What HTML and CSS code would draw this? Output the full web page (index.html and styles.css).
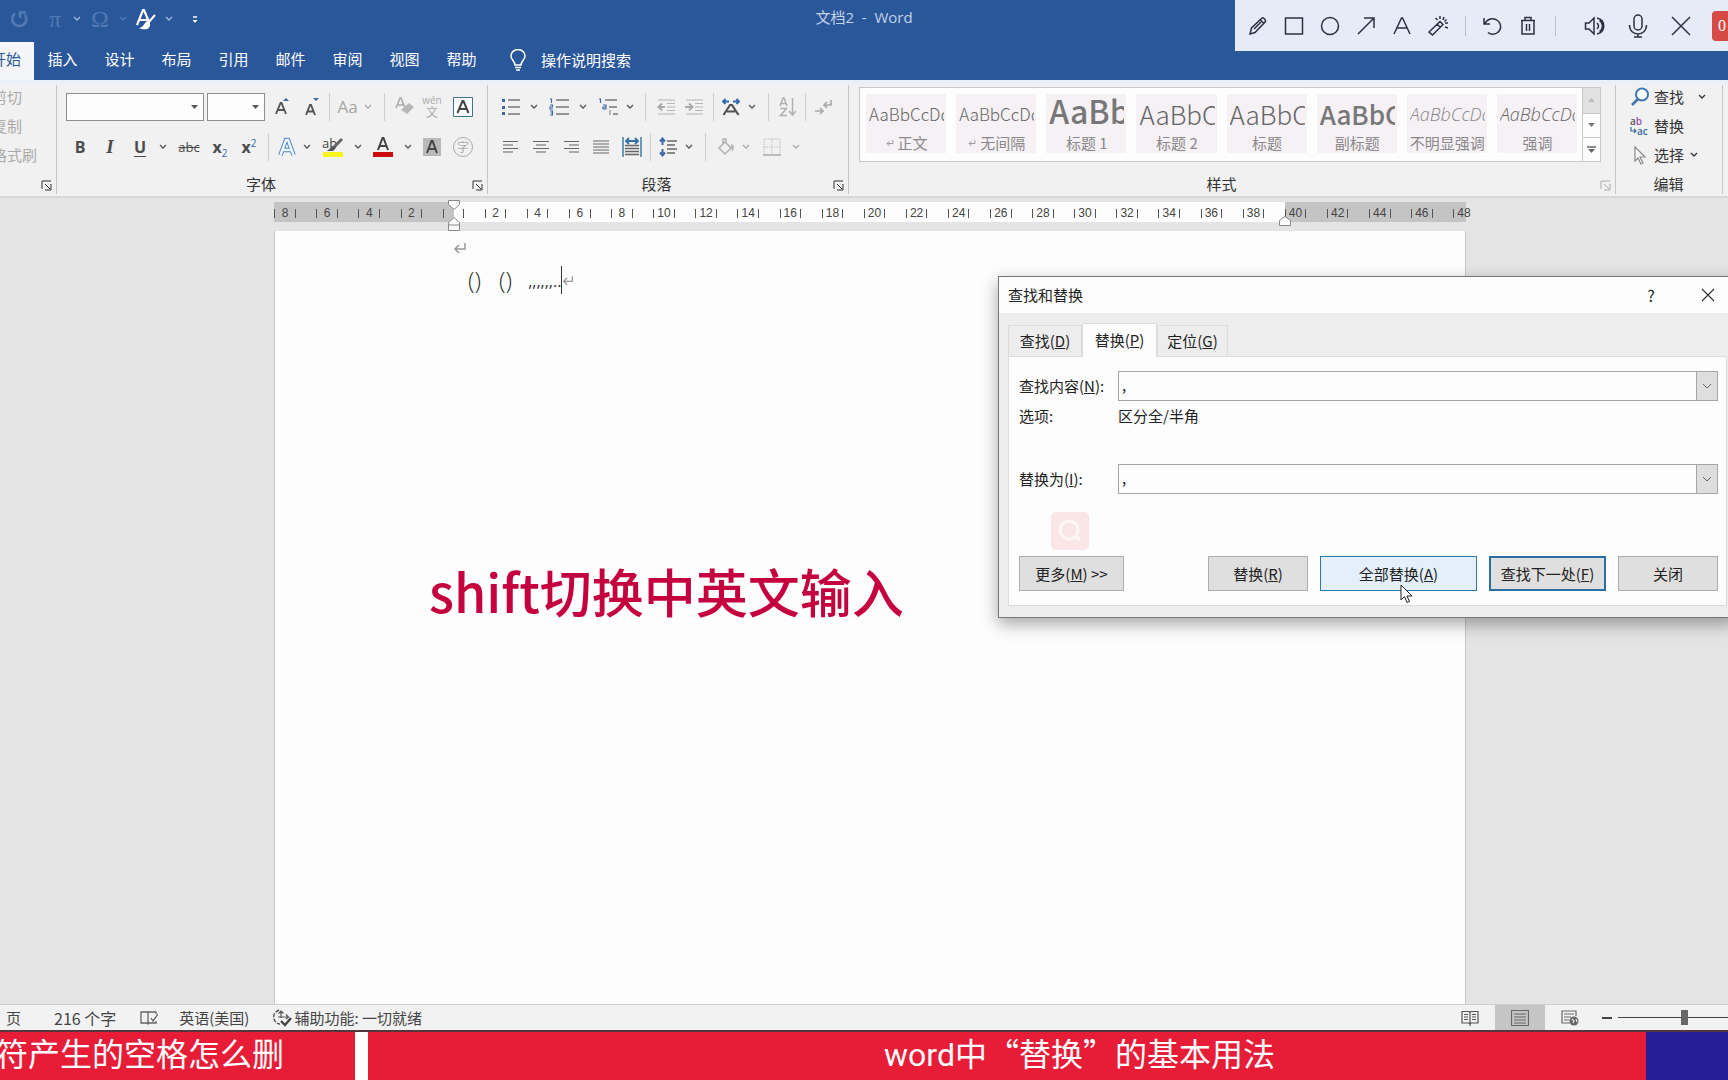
FILE: index.html
```html
<!DOCTYPE html>
<html lang="zh-CN">
<head>
<meta charset="utf-8">
<title>文档2 - Word</title>
<link rel="stylesheet" href="styles.css">
</head>
<body>
<svg class="defs" aria-hidden="true">
  <symbol id="chev" viewBox="0 0 8 6"><path d="M1 1l3 3 3-3" fill="none" stroke="currentColor" stroke-width="1.3"/></symbol>
  <symbol id="launch" viewBox="0 0 11 11"><path d="M1 9V1h9M4 4l5 5M10 4v6H4" fill="none" stroke="currentColor" stroke-width="1"/></symbol>
  <symbol id="ret" viewBox="0 0 14 12"><path d="M12 1v6H2M6 3L2 7l4 4" fill="none" stroke="currentColor" stroke-width="1.5"/></symbol>
</svg>

<header class="titlebar">
  <div class="quick">
    <button class="dim" aria-label="重复"><svg width="18" height="18" viewBox="0 0 18 18"><path d="M4 3.500A7 7 0 1 0 14 5M9 8V2.500H15" fill="none" stroke="currentColor" stroke-width="2.600"/></svg></button>
    <button class="dim sym" aria-label="公式">π</button>
    <button class="mid" aria-label="公式选项"><svg width="8" height="6"><use href="#chev"/></svg></button>
    <button class="dim sym" aria-label="符号">Ω</button>
    <button class="dim" aria-label="符号选项"><svg width="8" height="6"><use href="#chev"/></svg></button>
    <button class="on" aria-label="样式格式"><svg width="22" height="22" viewBox="0 0 22 22"><path d="M2 17L8 2h1l5 12M4 12h8" fill="none" stroke="#fff" stroke-width="2.200"/><path d="M20 7l-7 8M13 14c-3 0-2 4-6 6 4 1 8 0 7-5z" fill="#fff" stroke="#fff" stroke-width="2"/></svg></button>
    <button class="mid" aria-label="样式选项"><svg width="8" height="6"><use href="#chev"/></svg></button>
    <button class="on" aria-label="自定义快速访问工具栏"><svg width="8" height="10" viewBox="0 0 8 10"><path d="M2 3h4" stroke="#fff" stroke-width="1.500"/><path d="M1.500 6h5L4 9z" fill="#fff"/></svg></button>
  </div>
  <h1 class="doc-name">文档2&nbsp; -&nbsp; Word</h1>
</header>

<nav class="tabs">
  <button class="tab active">开始</button>
  <button class="tab">插入</button>
  <button class="tab">设计</button>
  <button class="tab">布局</button>
  <button class="tab">引用</button>
  <button class="tab">邮件</button>
  <button class="tab">审阅</button>
  <button class="tab">视图</button>
  <button class="tab">帮助</button>
  <button class="tell"><svg width="16" height="22" viewBox="0 0 16 22"><path d="M5 16c0-4-4-5-4-9a7 6.500 0 0 1 14 0c0 4-4 5-4 9zM5 18.500h6M6 21h4" fill="none" stroke="#fff" stroke-width="1.500"/></svg>操作说明搜索</button>
</nav>

<section class="ribbon">
  <div class="group clipboard">
    <div class="stack off"><button>剪切</button><button>复制</button><button>格式刷</button></div>
    <footer><span></span><button aria-label="剪贴板设置"><svg width="11" height="11"><use href="#launch"/></svg></button></footer>
  </div>

  <div class="group font">
    <div class="row font1">
      <label class="combo"><select aria-label="字体"><option></option></select><svg width="7" height="5" viewBox="0 0 7 5"><path d="M0 0h7L3.500 4z" fill="#555"/></svg></label>
      <label class="combo second"><select aria-label="字号"><option></option></select><svg width="7" height="5" viewBox="0 0 7 5"><path d="M0 0h7L3.500 4z" fill="#555"/></svg></label>
      <button aria-label="增大字号"><svg width="16" height="20" viewBox="0 0 16 20"><path d="M2 17L6.500 6h1L12 17M3.500 13h7" fill="none" stroke="#555" stroke-width="1.900"/><path d="M9 4l3-3 3 3z" fill="#3c6aa5"/></svg></button>
      <button aria-label="减小字号"><svg width="16" height="20" viewBox="0 0 16 20"><path d="M2 18L6 8h1l4 10M3.500 14.500h6.500" fill="none" stroke="#555" stroke-width="1.900"/><path d="M9 1h6l-3 3z" fill="#3c6aa5"/></svg></button>
      <i class="sep"></i>
      <button class="off aa">Aa</button>
      <button class="off" aria-label="大小写选项"><svg width="8" height="6"><use href="#chev"/></svg></button>
      <i class="sep"></i>
      <button aria-label="清除格式"><svg width="20" height="22" viewBox="0 0 20 22"><path d="M1 12L5 2h1l4 10M3 9h5" fill="none" stroke="#aaa" stroke-width="1.600"/><path d="M14 7l5 4-7 7-6-4z" fill="#b8b8b8"/></svg></button>
      <button class="pinyin off"><small>wén</small>文</button>
      <button aria-label="字符边框"><svg width="20" height="20" viewBox="0 0 20 20"><path d="M.500.500h19v19H.500z" fill="#fdfdfd" stroke="#3f7390"/><path d="M4.500 16L9.500 4h1l5 12M6.500 12h7" fill="none" stroke="#444" stroke-width="2"/></svg></button>
    </div>
    <div class="row font2">
      <button class="glyph bold">B</button>
      <button class="glyph italic">I</button>
      <button class="glyph under">U</button>
      <button aria-label="下划线选项"><svg width="8" height="6"><use href="#chev"/></svg></button>
      <button class="glyph strike">abc</button>
      <button class="glyph script">x<sub>2</sub></button>
      <button class="glyph script">x<sup>2</sup></button>
      <i class="sep"></i>
      <button aria-label="文本效果"><svg width="20" height="22" viewBox="0 0 20 22"><path d="M3.500 19L9 4h2l5.500 15M6 14h8" fill="none" stroke="#4a86c5" stroke-width="4.500"/><path d="M3.500 19L9 4h2l5.500 15M6 14h8" fill="none" stroke="#eef5fc" stroke-width="2.500"/></svg></button>
      <button aria-label="文本效果选项"><svg width="8" height="6"><use href="#chev"/></svg></button>
      <button class="high"><span>ab</span><svg width="22" height="20" viewBox="0 0 22 20"><path d="M20 2l-9 9" stroke="#666" stroke-width="3"/><path d="M11 9l-6 5h6l3-3z" fill="#555"/><path d="M1 15h20v5H1z" fill="#f7f31c"/></svg></button>
      <button aria-label="突出显示选项"><svg width="8" height="6"><use href="#chev"/></svg></button>
      <button aria-label="字体颜色"><svg width="20" height="22" viewBox="0 0 20 22"><path d="M5 14L9.500 2h1L15 14M7 10h6" fill="none" stroke="#444" stroke-width="2"/><path d="M0 16h20v5H0z" fill="#cc0d0d"/></svg></button>
      <button aria-label="字体颜色选项"><svg width="8" height="6"><use href="#chev"/></svg></button>
      <button aria-label="字符底纹"><svg width="18" height="18" viewBox="0 0 18 18"><path d="M0 0h18v18H0z" fill="#b9b9b9"/><path d="M4 15L8.500 3h1L14 15M6 11h6" fill="none" stroke="#444" stroke-width="2"/></svg></button>
      <button class="circled off">字</button>
    </div>
    <footer><span>字体</span><button aria-label="字体设置"><svg width="11" height="11"><use href="#launch"/></svg></button></footer>
  </div>

  <div class="group para">
    <div class="row para1">
      <button aria-label="项目符号"><svg width="18" height="18" viewBox="0 0 18 18"><path d="M6 2h12M6 9h12M6 16h12" stroke="#777" stroke-width="1.300"/><path d="M0 1h3v3H0zM0 8h3v3H0zM0 14h3v3H0z" fill="#3c6aa5"/></svg></button>
      <button aria-label="项目符号选项"><svg width="8" height="6"><use href="#chev"/></svg></button>
      <button aria-label="编号"><svg width="20" height="18" viewBox="0 0 20 18"><path d="M7 2h13M7 9h13M7 16h13" stroke="#777" stroke-width="1.300"/><path d="M1 1h1.500v4M1 7h2.500v2H1v2h3M1 13h2.500v4H1M1.500 15h2" fill="none" stroke="#3c6aa5" stroke-width="1.200"/></svg></button>
      <button aria-label="编号选项"><svg width="8" height="6"><use href="#chev"/></svg></button>
      <button aria-label="多级列表"><svg width="20" height="18" viewBox="0 0 20 18"><path d="M7 2h12M11 9h8M15 16h5" stroke="#777" stroke-width="1.300"/><path d="M1 1h1.500v4M5 7h3v4H5V9h3" fill="none" stroke="#3c6aa5" stroke-width="1.200"/><path d="M12 12v5" stroke="#777"/></svg></button>
      <button aria-label="多级列表选项"><svg width="8" height="6"><use href="#chev"/></svg></button>
      <i class="sep"></i>
      <button aria-label="减少缩进"><svg width="18" height="16" viewBox="0 0 18 16"><path d="M1 1h17M10 4.500h8M10 8h8M10 11.500h8M1 15h17" stroke="#b5b5b5" stroke-width="1.200"/><path d="M8 8H2M5 4.500L1.500 8 5 11.500" fill="none" stroke="#aaa" stroke-width="2"/></svg></button>
      <button aria-label="增加缩进"><svg width="18" height="16" viewBox="0 0 18 16"><path d="M1 1h17M10 4.500h8M10 8h8M10 11.500h8M1 15h17" stroke="#b5b5b5" stroke-width="1.200"/><path d="M0 8h7M4 4.500L7.500 8 4 11.500" fill="none" stroke="#aaa" stroke-width="2"/></svg></button>
      <i class="sep"></i>
      <button aria-label="中文版式"><svg width="20" height="18" viewBox="0 0 20 18"><path d="M2.500 17L9 7h2l6.500 10M6 13.500h8" fill="none" stroke="#555" stroke-width="2.200"/><path d="M8 3.500H2M4.500 1L2 3.500 4.500 6M12 3.500h6M15.500 1L18 3.500 15.500 6" fill="none" stroke="#2f6bb0" stroke-width="1.800"/></svg></button>
      <button aria-label="中文版式选项"><svg width="8" height="6"><use href="#chev"/></svg></button>
      <i class="sep"></i>
      <button aria-label="排序"><svg width="18" height="20" viewBox="0 0 18 20"><path d="M1 9l3-8h1l3 8M2.500 6.500h4M1.500 11.500h6l-6 7h6.500M13.500 1v17M10 14l3.500 4 3.500-4" fill="none" stroke="#b0b0b0" stroke-width="1.500"/></svg></button>
      <i class="sep"></i>
      <button aria-label="显示编辑标记"><svg width="18" height="16" viewBox="0 0 18 16"><path d="M16 1v5H9M12 3L9 6l3 3M0 12h8M5 9l3 3-3 3" fill="none" stroke="#aaa" stroke-width="1.700"/></svg></button>
    </div>
    <div class="row para2">
      <button aria-label="左对齐"><svg width="16" height="14" viewBox="0 0 16 14"><path d="M0 1.500h15M0 5h10M0 8.500h15M0 12h10" stroke="#666" stroke-width="1.200"/></svg></button>
      <button aria-label="居中"><svg width="16" height="14" viewBox="0 0 16 14"><path d="M0 1.500h16M3 5h10M0 8.500h16M3 12h10" stroke="#666" stroke-width="1.200"/></svg></button>
      <button aria-label="右对齐"><svg width="16" height="14" viewBox="0 0 16 14"><path d="M1 1.500h15M6 5h10M1 8.500h15M6 12h10" stroke="#666" stroke-width="1.200"/></svg></button>
      <button aria-label="两端对齐"><svg width="16" height="14" viewBox="0 0 16 14"><path d="M0 1h16M0 4h16M0 7h16M0 10h16M0 13h16" stroke="#666" stroke-width="1.200"/></svg></button>
      <button aria-label="分散对齐"><svg width="20" height="20" viewBox="0 0 20 20"><path d="M1 0v20M19 0v20" stroke="#3f7ea5" stroke-width="1.500"/><path d="M3 8.500h14M3 11.500h14M3 14.500h14M3 17.500h14" stroke="#666" stroke-width="1.500"/><path d="M4 4h12M7 1L4 4l3 3M13 1l3 3-3 3" fill="none" stroke="#3570a8" stroke-width="1.800"/></svg></button>
      <i class="sep"></i>
      <button aria-label="行距"><svg width="18" height="20" viewBox="0 0 18 20"><path d="M8 4h10M8 8h8M8 12h10M8 16h8" stroke="#666" stroke-width="1.300"/><path d="M3.500 2v6M1 4.500l2.500-3 2.500 3M3.500 12v6M1 15.500l2.500 3 2.500-3" fill="none" stroke="#3d68ae" stroke-width="2"/></svg></button>
      <button aria-label="行距选项"><svg width="8" height="6"><use href="#chev"/></svg></button>
      <i class="sep"></i>
      <button aria-label="底纹"><svg width="18" height="18" viewBox="0 0 18 18"><path d="M8 4l6 6-6 6-6-6zM6 7V1h3v4" fill="none" stroke="#b0b0b0" stroke-width="1.500"/><path d="M14 6c4 1 3 5 1 8z" fill="#b0b0b0"/></svg></button>
      <button class="off" aria-label="底纹选项"><svg width="8" height="6"><use href="#chev"/></svg></button>
      <button aria-label="边框"><svg width="18" height="18" viewBox="0 0 18 18"><path d="M1 17V1h16v16M9 1v16M1 9h16" fill="none" stroke="#c4bcbc" stroke-dasharray="1.500 1"/><path d="M0 17h18" stroke="#aaa" stroke-width="1.500"/></svg></button>
      <button class="off" aria-label="边框选项"><svg width="8" height="6"><use href="#chev"/></svg></button>
    </div>
    <footer><span>段落</span><button aria-label="段落设置"><svg width="11" height="11"><use href="#launch"/></svg></button></footer>
  </div>

  <div class="group styles">
    <div class="gallery">
      <div class="cards">
        <button class="card"><span class="demo">AaBbCcDd</span><span class="name"><svg width="8" height="8"><use href="#ret"/></svg>正文</span></button>
        <button class="card"><span class="demo">AaBbCcDd</span><span class="name"><svg width="8" height="8"><use href="#ret"/></svg>无间隔</span></button>
        <button class="card"><span class="demo huge">AaBb</span><span class="name">标题 1</span></button>
        <button class="card"><span class="demo large">AaBbC</span><span class="name">标题 2</span></button>
        <button class="card"><span class="demo large">AaBbC</span><span class="name">标题</span></button>
        <button class="card"><span class="demo large heavy">AaBbC</span><span class="name">副标题</span></button>
        <button class="card"><span class="demo slant">AaBbCcDd</span><span class="name">不明显强调</span></button>
        <button class="card"><span class="demo slant dark">AaBbCcDd</span><span class="name">强调</span></button>
      </div>
      <div class="scroller">
        <button class="up" aria-label="上一行"><svg width="7" height="5" viewBox="0 0 7 5"><path d="M0 4h7L3.500 0z" fill="#bbb"/></svg></button>
        <button aria-label="下一行"><svg width="7" height="5" viewBox="0 0 7 5"><path d="M0 0h7L3.500 4z" fill="#777"/></svg></button>
        <button aria-label="其他"><svg width="9" height="8" viewBox="0 0 9 8"><path d="M0 1h9" stroke="#666" stroke-width="1.500"/><path d="M1 3h7L4.500 7z" fill="#666"/></svg></button>
      </div>
    </div>
    <footer><span>样式</span><button class="off" aria-label="样式设置"><svg width="11" height="11"><use href="#launch"/></svg></button></footer>
  </div>

  <div class="group edit">
    <div class="stack">
      <button><svg width="20" height="20" viewBox="0 0 20 20"><circle cx="12" cy="7.500" r="6" fill="#fafcff" stroke="#3f78b0" stroke-width="2"/><path d="M8 12l-6 6" stroke="#3f78b0" stroke-width="2.600"/></svg>查找<svg class="far" width="8" height="6"><use href="#chev"/></svg></button>
      <button><span class="abac"><b>a<em>b</em></b><b class="low"><svg width="7" height="8" viewBox="0 0 7 8"><path d="M1 0v4h5M4 2l2 2-2 2" fill="none" stroke="currentColor" stroke-width="1.200"/></svg>ac</b></span>替换</button>
      <button><svg width="20" height="20" viewBox="0 0 20 20"><path d="M5 2v14l3-3 3 6 2-1-3-6h5z" fill="#fafafa" stroke="#888" stroke-width="1.200"/></svg>选择<svg class="near" width="8" height="6"><use href="#chev"/></svg></button>
    </div>
    <footer><span>编辑</span></footer>
  </div>
</section>

<main class="desk">
  <div class="column">
    <div class="ruler">
      <ol class="marks">
        <li>8</li><li>6</li><li>4</li><li>2</li><li></li><li>2</li><li>4</li><li>6</li><li>8</li><li>10</li><li>12</li><li>14</li><li>16</li><li>18</li><li>20</li><li>22</li><li>24</li><li>26</li><li>28</li><li>30</li><li>32</li><li>34</li><li>36</li><li>38</li><li>40</li><li>42</li><li>44</li><li>46</li><li>48</li>
      </ol>
      <svg class="pin start" width="12" height="32" viewBox="0 0 12 32"><path d="M.500.500h11v4L6 9.500.500 4.500zM.500 30.500v-8L6 17.500l5.500 5v8zM.500 25h11" fill="#fdfdfd" stroke="#888"/></svg>
      <svg class="pin end" width="12" height="10" viewBox="0 0 12 10"><path d="M.500 9.500v-5L6 .500l5.500 4v5z" fill="#fdfdfd" stroke="#888"/></svg>
    </div>
    <article class="paper">
      <p><svg width="14" height="12"><use href="#ret"/></svg></p>
      <p class="typed"><span>()</span><span>()</span><span class="dots">,,,,,,..</span><i class="caret"></i><svg width="12" height="11"><use href="#ret"/></svg></p>
    </article>
  </div>
</main>

<div class="status">
  <span class="s-page">页</span>
  <span class="s-count">216 个字</span>
  <svg class="s-proof" width="18" height="16" viewBox="0 0 18 16"><path d="M8 2v12M8 2H1v11h6l1 1 1-1h7v-2M8 2h8v2M11 8l2 3 5-7" fill="none" stroke="#666" stroke-width="1.300"/></svg>
  <span class="s-lang">英语(美国)</span>
  <svg class="s-acc" width="20" height="18" viewBox="0 0 20 18"><path d="M7 1C2 3 0 8 3 12c1 2 3 3 5 3" fill="none" stroke="#555" stroke-width="1.400" stroke-dasharray="4 1.500"/><path d="M9 2v7M6.500 4.500L9 2l2.500 2.500M6 8h10M14 5.500L16.500 8 14 10" fill="none" stroke="#555" stroke-width="1.200"/><path d="M9 12l4 4 6-7" fill="none" stroke="#444" stroke-width="2.400"/></svg>
  <span>辅助功能: 一切就绪</span>
  <div class="views">
    <button aria-label="阅读视图"><svg width="18" height="16" viewBox="0 0 18 16"><path d="M9 2v14M1 1.500h7l1 1 1-1h7V13h-7l-1 1-1-1H1zM3 4.500h4M3 7h4M3 9.500h4M11 4.500h4M11 7h4M11 9.500h4" fill="none" stroke="#555" stroke-width="1.200"/></svg></button>
    <button class="current" aria-label="页面视图"><svg width="18" height="16" viewBox="0 0 18 16"><path d="M.500.500h17v15H.500zM3 4h12M3 7h12M3 10h12M3 13h12" fill="none" stroke="#666" stroke-width="1.200"/></svg></button>
    <button aria-label="Web 视图"><svg width="18" height="16" viewBox="0 0 18 16"><path d="M9 13H1V1h14v5M3 4h10M3 7h7M3 10h5" fill="none" stroke="#666" stroke-width="1.200"/><circle cx="13" cy="11" r="4.500" fill="#666"/><path d="M11 9l2 2-1 2M15 9l1 3" stroke="#eee" stroke-width="1.200" fill="none"/></svg></button>
  </div>
  <button class="minus" aria-label="缩小"></button>
  <input class="zoom" type="range" min="0" max="100" value="61" aria-label="缩放">
</div>

<div class="banner">
  <div class="left"><span>符产生的空格怎么删</span></div>
  <div class="mid-title"><span class="latin">word</span>中“替换”的基本用法</div>
  <div class="blue"></div>
</div>

<div class="subtitle">shift切换中英文输入</div>

<div class="recorder">
  <button aria-label="画笔"><svg width="20" height="20" viewBox="0 0 20 20"><path d="M2 18l1.500-6L14 2c1-1 4 2 3.500 3.500L7 16.500zM12.500 4l3.500 3.500M6 13l7-7" /></svg></button>
  <button aria-label="矩形"><svg width="20" height="20" viewBox="0 0 20 20"><path d="M1.500 2h17v16h-17z"/></svg></button>
  <button aria-label="椭圆"><svg width="20" height="20" viewBox="0 0 20 20"><circle cx="10" cy="10" r="8.500"/></svg></button>
  <button aria-label="箭头"><svg width="20" height="20" viewBox="0 0 20 20"><path d="M2 18L18 2M8 2h10v10"/></svg></button>
  <button aria-label="文字"><svg width="20" height="20" viewBox="0 0 20 20"><path d="M2 18L9.500 2h1L18 18M5 12h10"/></svg></button>
  <button aria-label="聚光"><svg width="20" height="20" viewBox="0 0 20 20"><path d="M1 16L12 5.500l3 3L4.500 19zM9 8l3.500 3.500M12 0v3M7.500 2l2 2M16 1l-1 3M20 7h-3M20 12l-3-1M18.500 3.500l-2 2"/></svg></button>
  <i></i>
  <button aria-label="撤销"><svg width="20" height="20" viewBox="0 0 20 20"><path d="M2 2v6h6M2.500 8C5 3 11 1 15.500 4.500S19.500 14 15 17c-3 2-7 1.500-9-.500"/></svg></button>
  <button aria-label="删除"><svg width="20" height="20" viewBox="0 0 20 20"><path d="M3 4.500h14M4 4.500V18h12V4.500M7 4V1.500h6V4M8.500 8v7M11.500 8v7"/></svg></button>
  <i></i>
  <button class="sound" aria-label="声音"><svg width="22" height="20" viewBox="0 0 22 20"><path d="M1.500 7H5l5-5v16l-5-5H1.500zM13 7c2 2 2 4 0 6M15.500 4.500c4 3 4 8 0 11M13 2c9 2 9 14 0 16"/></svg></button>
  <button class="wide" aria-label="麦克风"><svg width="20" height="24" viewBox="0 0 20 24"><rect x="6" y="1" width="8" height="15" rx="4"/><path d="M1.500 11c0 12 17 12 17 0M10 19.500V23M6 23h8"/></svg></button>
  <button class="wide" aria-label="关闭工具栏"><svg width="20" height="20" viewBox="0 0 20 20"><path d="M1 1l18 18M19 1L1 19"/></svg></button>
  <b class="timer">0</b>
</div>

<form class="dialog" role="dialog" aria-label="查找和替换">
  <div class="d-title"><span>查找和替换</span><button type="button">?</button><button type="button" aria-label="关闭窗口"><svg width="14" height="14" viewBox="0 0 14 14"><path d="M1 1l12 12M13 1L1 13" stroke="#333" stroke-width="1.200"/></svg></button></div>
  <div class="d-tabs"><button type="button">查找(<u>D</u>)</button><button type="button" class="sel">替换(<u>P</u>)</button><button type="button">定位(<u>G</u>)</button></div>
  <div class="d-panel">
    <div class="fields">
      <label for="find">查找内容(<u>N</u>):</label>
      <div class="box"><input id="find" type="text" value=","><button type="button" aria-label="查找历史"><svg width="10" height="8" viewBox="0 0 10 8"><path d="M1 2l4 4 4-4" fill="none" stroke="#666"/></svg></button></div>
      <span>选项:</span><span>区分全/半角</span>
      <label for="repl" class="lower">替换为(<u>I</u>):</label>
      <div class="box lower"><input id="repl" type="text" value=","><button type="button" aria-label="替换历史"><svg width="10" height="8" viewBox="0 0 10 8"><path d="M1 2l4 4 4-4" fill="none" stroke="#666"/></svg></button></div>
    </div>
    <svg class="ghost" width="38" height="38" viewBox="0 0 38 38"><rect width="38" height="38" rx="5" fill="#fae6e6"/><circle cx="18" cy="18" r="9" fill="none" stroke="#fff6f6" stroke-width="3"/><path d="M24 24l5 4" stroke="#fff6f6" stroke-width="4"/></svg>
    <div class="actions">
      <button type="button" class="more">更多(<u>M</u>) &gt;&gt;</button>
      <button type="button" class="std">替换(<u>R</u>)</button>
      <button type="button" class="all">全部替换(<u>A</u>)</button>
      <button type="button" class="next">查找下一处(<u>F</u>)</button>
      <button type="button" class="std">关闭</button>
    </div>
  </div>
  <svg class="pointer" width="13" height="20" viewBox="0 0 13 20"><path d="M1 1v15l3.500-3.500L7 18.500l2.500-1L7 12h5z" fill="#fff" stroke="#222"/></svg>
</form>
</body>
</html>
```

FILE: styles.css
```css
* { box-sizing: border-box; }
body {
  margin: 0;
  min-height: 100vh;
  display: flex;
  flex-direction: column;
  position: relative;
  overflow: hidden;
  background: #e4e4e4;
  color: #333;
  font: 15px/20px "Noto Sans CJK SC", "Noto Sans", sans-serif;
}
button, input, select { font: inherit; color: inherit; }
button {
  display: flex;
  align-items: center;
  justify-content: center;
  padding: 0;
  border: 0;
  background: none;
  white-space: nowrap;
}
svg { flex: none; display: block; }
.defs { position: absolute; width: 0; height: 0; }
.off { color: #aaa; }

/* title bar and tabs */
.titlebar {
  height: 42px;
  display: grid;
  grid-template-columns: 1fr auto 1fr;
  background: #2a579a;
  color: #c3d2e8;
}
.quick { display: grid; grid-template-columns: 40px 30px 14px 32px 14px 32px 14px 38px; height: 38px; justify-content: start; }
.quick .dim { color: #5279b3; }
.quick .mid { color: #a3b8d8; }
.quick .sym { font: 24px/24px "Liberation Serif", serif; }
.quick .on { color: #fff; }
.doc-name { margin: 0; font-size: 15px; font-weight: 400; line-height: 34px; white-space: pre; font-family: "Open Sans", "Noto Sans CJK SC", sans-serif; }
.tabs { display: flex; height: 38px; background: #2a579a; color: #fff; }
.tab { width: 57px; padding-bottom: 4px; }
.tab.active { width: 34px; background: #f3f5f9; color: #2a579a; justify-content: flex-end; padding-right: 13px; overflow: hidden; }
.tell { gap: 15px; margin-left: 20px; padding-bottom: 2px; }

/* ribbon */
.ribbon {
  display: flex;
  height: 118px;
  padding-top: 5px;
  background: linear-gradient(#e9f0fa 0 4px, #f1f1f1 5px);
  border-bottom: 2px solid #d6d6d6;
}
.group { height: 109px; display: flex; flex-direction: column; border-right: 1px solid #c6c6c6; }
.group footer { display: grid; grid-template-columns: 1fr 20px; margin-top: auto; height: 21px; align-items: center; text-align: center; color: #333; }
.group footer span { padding-right: 11px; }
.group footer button { padding-top: 4px; }
.clipboard { width: 57px; }
.clipboard .stack { margin-left: -8px; }
.stack { display: grid; grid-auto-rows: 29px; justify-items: start; margin-top: -3px; }
.font { width: 431px; padding-left: 9px; }
.para { width: 361px; padding-left: 8px; }
.styles { flex: 1; padding-left: 10px; }
.edit { width: 107px; padding-left: 14px; margin-right: 5px; }
.edit footer { grid-template-columns: 1fr; padding-right: 4px; }
.edit .stack button { gap: 4px; }
.far { margin-left: 10px; }
.near { margin-left: 2px; }
.abac { width: 20px; font: 10px/10px "Open Sans", sans-serif; }
.abac b { display: flex; height: 10px; align-items: center; font-weight: 600; color: #555; }
.abac .low { color: #3b6d9c; }
.abac em { font-style: normal; color: #9a4fb0; }

.row { display: grid; height: 28px; margin-top: 8px; color: #555; }
.row + .row { margin-top: 12px; }
.font1 { grid-template-columns: 138px 61px 33px 27px 8px 29px 12px 20px 22px 32px 30px; }
.font2 { grid-template-columns: 28px 32px 28px 18px 34px 28px 30px 8px 30px 10px 42px 8px 42px 8px 40px 22px; }
.para1 { grid-template-columns: 30px 16px 34px 14px 36px 8px 22px 20px 36px 2px 34px 8px 24px 16px 18px 20px; }
.para2 { grid-template-columns: 30px 30px 30px 30px 32px 4px 32px 10px 22px 20px 20px 32px 16px; }
.sep { width: 1px; height: 28px; background: #cfcfcf; justify-self: center; }
.combo { display: grid; grid-template-columns: 1fr 12px; align-items: center; border: 1px solid #8f8f8f; background: #fdfdfd; }
.combo.second { margin-left: 3px; }
.combo select { width: 100%; height: 24px; border: 0; background: none; appearance: none; }
.off.aa { font: 17px/20px "Open Sans", sans-serif; color: #a5a5a5; }
.pinyin { flex-direction: column; font-size: 12px; line-height: 14px; }
.pinyin small { font: 10px/10px "Open Sans", sans-serif; }
.glyph { font: 700 16px/20px "Open Sans", sans-serif; color: #4c4c4c; }
.italic { font-family: "Liberation Serif", serif; font-style: italic; font-size: 19px; }
.under { text-decoration: underline; text-underline-offset: 3px; }
.strike { font-weight: 400; font-size: 13px; text-decoration: line-through; }
.script { align-items: baseline; padding-top: 4px; }
.script sub, .script sup { font-size: 10px; font-weight: 400; color: #2f6bb0; line-height: 10px; align-self: center; }
.script sub { padding-top: 8px; }
.script sup { padding-bottom: 12px; }
.high { display: grid; grid-template-columns: 22px; justify-content: center; align-content: center; }
.high > * { grid-area: 1 / 1; }
.high span { font: 13px/12px "Open Sans", sans-serif; align-self: start; text-align: left; color: #444; }
.circled { width: 20px; height: 20px; align-self: center; justify-self: center; border: 1px solid #aaa; border-radius: 50%; font-size: 12px; line-height: 12px; }

/* style gallery */
.gallery { display: flex; height: 75px; margin: 2px 14px 0 0; border: 1px solid #c9c9c9; background: #fdfdfd; }
.cards { flex: 1; display: grid; grid-template-columns: repeat(8, minmax(0, 1fr)); gap: 10px; padding: 6px 5px 8px 6px; }
.card { flex-direction: column; padding: 0 2px 0 3px; background: #f5f1f5; color: #8b888b; justify-content: flex-start; align-items: stretch; overflow: hidden; }
.demo { height: 39px; font: 300 17px/40px "Noto Sans CJK SC", sans-serif; overflow: hidden; text-align: left; color: #666; }
.demo.large { font-size: 26px; }
.demo.huge { font-size: 32px; font-weight: 500; line-height: 32px; color: #777; }
.demo.heavy { font-weight: 500; color: #777; }
.demo.slant { font-family: "Open Sans", sans-serif; font-style: italic; font-size: 18px; color: #888; }
.demo.slant.dark { color: #666; }
.name { display: flex; justify-content: center; align-items: center; gap: 4px; line-height: 20px; }
.scroller { width: 18px; display: grid; grid-template-rows: 25px 24px 24px; }
.scroller button { border-left: 1px solid #c9c9c9; border-top: 1px solid #c9c9c9; }
.scroller .up { background: #e1e1e1; border-top: 0; }

/* document */
.desk { flex: 1; display: grid; grid-template-columns: 274px 1fr 262px; }
.column { grid-column: 2; display: flex; flex-direction: column; min-width: 0; }
.ruler {
  position: relative;
  height: 20px;
  margin: 4px 0 9px;
  background: linear-gradient(90deg, #c4c4c4 180px, #fdfdfd 180px calc(100% - 181px), #c4c4c4 calc(100% - 181px));
}
.marks { display: grid; grid-template-columns: repeat(29, 1fr); margin: 0 -19px 0 -10px; padding: 0; list-style: none; font: 12px/23px "Liberation Sans", sans-serif; color: #444; text-align: center; }
.marks li { background: linear-gradient(#555, #555) 25% 7px / 1px 9px no-repeat, linear-gradient(#555, #555) 75% 7px / 1px 9px no-repeat; }
.marks li:last-child { background: linear-gradient(#555, #555) 25% 7px / 1px 9px no-repeat; }
.pin { position: absolute; }
.pin.start { left: 174px; top: -2px; }
.pin.end { right: 175px; top: 14px; }
.paper { flex: 1; background: #fdfdfd; border: solid #c8c8c8; border-width: 0 1px; padding: 11px 178px; color: #999; }
.paper p { display: flex; align-items: center; margin: 0; height: 12px; }
.paper .typed { height: 28px; margin-top: 12px; padding-left: 15px; font: 300 24px/28px "Open Sans", sans-serif; color: #333; }
.typed span { margin-right: 18px; }
.typed .dots { margin: 0; margin-left: -2px; font-size: 16px; font-weight: 400; padding-top: 2px; }
.caret { width: 1px; height: 28px; background: #333; }
.typed svg { color: #999; }

/* status bar */
.status { display: flex; align-items: center; height: 28px; border-top: 1px solid #cfcfcf; border-bottom: 2px solid #55363c; background: #f2f2f2; color: #444; }
.s-page { margin: 0 33px 0 6px; }
.s-count { margin-right: 24px; font-size: 16px; }
.s-lang { margin: 0 23px 0 21px; }
.s-acc { margin-right: 2px; }
.views { display: flex; align-self: stretch; margin-left: auto; }
.views button { width: 50px; }
.views .current { background: #c5c5c5; }
.minus { width: 10px; height: 2px; margin: 0 6px 0 7px; background: #444; }
.zoom { width: 110px; height: 16px; margin: 0; appearance: none; background: linear-gradient(#444, #444) center / 100% 1px no-repeat; }
.zoom::-webkit-slider-thumb { appearance: none; width: 7px; height: 15px; background: #666; }

/* video banner */
.banner { display: flex; height: 48px; gap: 13px; background: #fff; color: #fff; font-size: 32px; line-height: 40px; }
.left { width: 355px; background: #e71d38; overflow: hidden; }
.left span { margin-left: -4px; }
.mid-title { flex: 1; padding-left: 145px; background: #e71d38; text-align: center; white-space: nowrap; }
.latin { font-family: Roboto, sans-serif; }
.blue { width: 82px; margin-left: -13px; background: #261e96; }
.subtitle { position: absolute; left: 429px; top: 561px; font-size: 52px; line-height: 60px; font-weight: 500; color: #c4003e; white-space: nowrap; }

/* screen recorder toolbar */
.recorder { position: absolute; top: 0; right: 0; width: 493px; height: 51px; padding-left: 5px; display: flex; align-items: center; background: #e6ecf7; overflow: hidden; }
.recorder svg { fill: none; stroke: #2c3040; stroke-width: 1.5px; }
.recorder button { width: 36px; height: 44px; flex: none; }
.recorder i { flex: none; width: 1px; height: 20px; margin: 0 8px 0 9px; background: #b9bfcb; }
.recorder .sound { width: 43px; margin-left: 9px; }
.recorder .wide { width: 43px; }
.timer { flex: none; margin-left: 10px; width: 60px; height: 30px; padding-left: 6px; border-radius: 4px; background: #d64a45; color: #fff; font: 16px/30px "Liberation Serif", serif; }

/* find and replace dialog */
.dialog { position: absolute; left: 998px; right: -8px; top: 276px; padding: 0 8px 11px 9px; border: 1px solid #777; background: #ededed; box-shadow: 0 6px 16px rgba(0, 0, 0, .35); color: #222; }
.d-title { display: flex; align-items: center; height: 36px; margin: 0 -8px 0 -9px; padding: 0 12px 0 9px; background: #fdfdfd; }
.d-title span { flex: 1; }
.d-title button { width: 58px; font-size: 16px; }
.d-title button:last-child { width: 30px; margin: 0 0 0 13px; }
.d-tabs { display: flex; align-items: flex-end; height: 43px; }
.d-tabs button { width: 74px; height: 31px; border: 1px solid #dcdcdc; border-bottom: 0; }
.d-tabs .sel { width: 75px; height: 34px; background: #fdfdfd; margin-bottom: -1px; position: relative; padding-bottom: 1px; }
.d-tabs button:last-child { width: 71px; }
.d-panel { height: 250px; border: 1px solid #dcdcdc; background: #fdfdfd; padding: 14px 8px 14px 10px; display: flex; flex-direction: column; }
.fields { display: grid; grid-template-columns: 99px 1fr; grid-template-rows: 30px 30px; align-items: center; }
.fields .lower { margin-top: 33px; }
.box { display: flex; height: 30px; border: 1px solid #a5a5a5; }
.box input { flex: 1; min-width: 0; padding: 0 3px 3px; border: 0; background: none; }
.box button { width: 21px; border-left: 1px solid #a5a5a5; background: #dedede; }
.ghost { margin: 18px 0 6px 32px; }
.actions { display: flex; margin-top: auto; gap: 12px; }
.actions button { height: 35px; border: 1px solid #adadad; background: #dfdfdf; }
.actions .more { width: 105px; margin-right: auto; }
.actions .std { width: 100px; }
.actions .all { width: 157px; border-color: #2f78a8; background: #e3effa; }
.actions .next { width: 117px; border: 2px solid #2a6f9f; }
.pointer { position: absolute; left: 401px; top: 307px; }
```
